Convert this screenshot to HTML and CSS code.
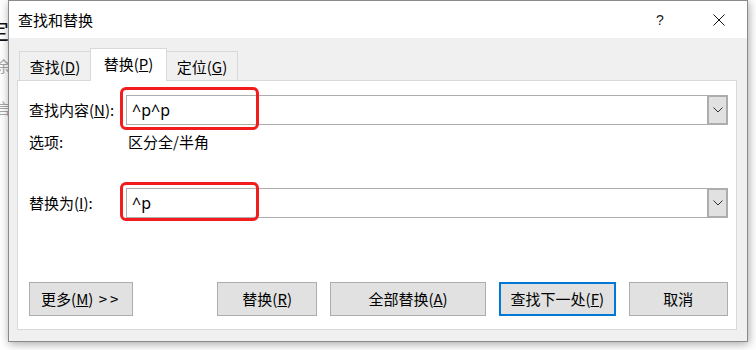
FILE: index.html
```html
<!DOCTYPE html>
<html lang="zh-CN">
<head>
<meta charset="utf-8">
<title>查找和替换</title>
<link rel="stylesheet" href="styles.css">
</head>
<body>
<div class="screen">
  <div class="doc-strip">
    <div class="doc-line big">定</div>
    <div class="doc-line">余</div>
    <div class="doc-line low">言</div>
  </div>
  <div class="dialog">
    <div class="titlebar">
      <span class="title">查找和替换</span>
      <span class="tb-help">?</span>
      <span class="tb-close">
        <svg width="12" height="12" viewBox="0 0 12 12"><path d="M0.5 0.5L11.5 11.5M11.5 0.5L0.5 11.5" stroke="#111" stroke-width="1" fill="none"/></svg>
      </span>
    </div>
    <div class="body">
      <div class="tabs">
        <div class="tab tab-first">查找(<u>D</u>)</div>
        <div class="tab tab-active">替换(<u>P</u>)</div>
        <div class="tab tab-last">定位(<u>G</u>)</div>
      </div>
      <div class="panel">
        <div class="row row-combo">
          <label class="lbl">查找内容(<u>N</u>):</label>
          <div class="combo">
            <span class="combo-text">^p^p</span>
            <span class="combo-btn"><svg width="10" height="6" viewBox="0 0 10 6"><path d="M0.5 0.5L5 5L9.5 0.5" stroke="#333" stroke-width="1" fill="none"/></svg></span>
            <span class="mark mark-find"></span>
          </div>
        </div>
        <div class="row row-opts">
          <span class="lbl">选项:</span>
          <span class="opts">区分全/半角</span>
        </div>
        <div class="row row-combo row-replace">
          <label class="lbl">替换为(<u>I</u>):</label>
          <div class="combo">
            <span class="combo-text">^p</span>
            <span class="combo-btn"><svg width="10" height="6" viewBox="0 0 10 6"><path d="M0.5 0.5L5 5L9.5 0.5" stroke="#333" stroke-width="1" fill="none"/></svg></span>
            <span class="mark mark-replace"></span>
          </div>
        </div>
        <div class="spacer"></div>
        <div class="buttons">
          <button class="btn btn-more">更多(<u>M</u>) <span class="arrows">&gt;&gt;</span></button>
          <button class="btn btn-rep">替换(<u>R</u>)</button>
          <button class="btn btn-all">全部替换(<u>A</u>)</button>
          <button class="btn btn-next">查找下一处(<u>F</u>)</button>
          <button class="btn btn-cancel">取消</button>
        </div>
      </div>
    </div>
  </div>
</div>
</body>
</html>
```

FILE: styles.css
```css
* { box-sizing: border-box; }
html, body {
  margin: 0;
  padding: 0;
  background: #ffffff;
  width: 756px;
  height: 350px;
  overflow: hidden;
  font-family: "Noto Sans CJK SC", "Noto Sans", sans-serif;
  color: #000;
}
.screen {
  display: flex;
  align-items: flex-start;
  width: 756px;
  height: 350px;
}
.doc-strip {
  width: 8px;
  flex: none;
  overflow: hidden;
  display: flex;
  flex-direction: column;
  padding-top: 18px;
}
.doc-line {
  font-size: 15px;
  line-height: 20px;
  color: #a8a8a8;
  margin-left: -4px;
  height: 20px;
}
.doc-line.big {
  font-size: 22px;
  line-height: 22px;
  color: #111;
  margin-left: -13px;
  height: 38px;
}
.doc-line.low { margin-top: 22px; }
.dialog {
  width: 740px;
  height: 342px;
  flex: none;
  border: 1px solid #8a8a8a;
  background: #f0f0f0;
  display: flex;
  flex-direction: column;
  box-shadow: 1px 2px 9px rgba(0, 0, 0, 0.35);
}
.titlebar {
  height: 37px;
  flex: none;
  background: #fff;
  display: flex;
  align-items: center;
  padding-left: 9px;
  font-size: 15px;
}
.title {
  line-height: 20px;
  margin-top: 1px;
}
.tb-help {
  margin-left: auto;
  font-family: "Liberation Sans", sans-serif;
  font-size: 14px;
  width: 10px;
  text-align: center;
  color: #222;
  margin-top: 1px;
}
.tb-close {
  width: 12px;
  height: 12px;
  display: flex;
  margin-left: 48px;
  margin-right: 22px;
  margin-top: 1px;
}
.body {
  flex: 1;
  display: flex;
  flex-direction: column;
  padding: 10px 10px 11px 8px;
}
.tabs {
  display: flex;
  align-items: flex-end;
  padding-left: 2px;
  margin-bottom: -1px;
  font-size: 15px;
}
.tab {
  height: 30px;
  border: 1px solid #d9d9d9;
  border-bottom: none;
  padding-top: 5px;
  line-height: 20px;
  text-align: center;
  background: #f0f0f0;
}
.tab-first { width: 71px; border-right: none; }
.tab-active {
  width: 77px;
  height: 33px;
  background: #fff;
  position: relative;
  z-index: 1;
}
.tab-last { width: 71px; border-left: none; }
.panel {
  height: 250px;
  background: #fff;
  border: 1px solid #d9d9d9;
  display: flex;
  flex-direction: column;
  padding: 14px 8px 13px 11px;
  font-size: 15px;
}
.row {
  display: grid;
  grid-template-columns: 97px 1fr;
  align-items: center;
}
.row-combo { height: 30px; }
.row-opts { height: 20px; margin-top: 7px; line-height: 20px; }
.row-replace { margin-top: 36px; }
.lbl { line-height: 20px; }
.opts { padding-left: 2px; }
.combo {
  height: 30px;
  border: 1px solid #adadad;
  display: flex;
  align-items: center;
  position: relative;
  background: #fff;
}
.combo-text {
  flex: 1;
  padding-left: 5px;
  font-family: "Noto Sans", sans-serif;
  font-size: 16px;
  line-height: 20px;
}
.combo-btn {
  width: 21px;
  height: 30px;
  margin: -1px -1px -1px 0;
  border: 2px solid #adadad;
  background: #e1e1e1;
  display: flex;
  align-items: center;
  justify-content: center;
}
.mark {
  position: absolute;
  left: -7px;
  border: 3px solid #f31c1c;
  border-radius: 6px;
  width: 139px;
  pointer-events: none;
}
.mark-find { top: -9px; height: 43px; }
.mark-replace { top: -7px; height: 39px; }
.spacer { flex: 1; }
.buttons {
  display: flex;
  height: 34px;
  gap: 13px;
}
.btn {
  height: 34px;
  border: 1px solid #adadad;
  background: #e1e1e1;
  font-family: "Noto Sans CJK SC", "Noto Sans", sans-serif;
  font-size: 15px;
  color: #000;
  padding: 0;
  line-height: 20px;
}
.arrows { letter-spacing: 3px; margin-left: 2px; }
.btn-more { width: 105px; margin-right: 71px; }
.btn-rep { width: 100px; }
.btn-all { width: 157px; }
.btn-next { width: 117px; border: 2px solid #0078d7; }
.btn-cancel { width: 100px; }
```
